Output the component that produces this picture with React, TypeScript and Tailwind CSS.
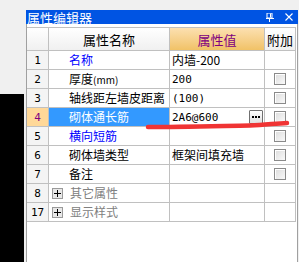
import React from "react";

const font = { fontFamily: '"Noto Sans CJK SC", "Noto Sans", sans-serif' };

function Checkbox() {
  return (
    <div className="w-[12px] h-[12px] border border-[#8a8a8a] bg-gradient-to-br from-[#dcdcdc] to-[#fafafa] shadow-[inset_1px_1px_0_#ffffff]" />
  );
}

function PlusBox() {
  return (
    <div className="w-[11px] h-[11px] border border-[#9a9a9a] bg-[#e8e8e8] flex items-center justify-center relative mr-[7px]">
      <div className="absolute w-[7px] h-[1px] bg-black" />
      <div className="absolute w-[1px] h-[7px] bg-black" />
    </div>
  );
}

type Row = {
  idx: string;
  name: string;
  value?: string;
  nameColor?: string;
  check?: boolean;
  selected?: boolean;
  group?: boolean;
};

const rows: Row[] = [
  { idx: "1", name: "名称", value: "内墙-200", nameColor: "text-[#0000ff]" },
  { idx: "2", name: "厚度", value: "200", check: true },
  { idx: "3", name: "轴线距左墙皮距离", value: "(100)", check: true },
  { idx: "4", name: "砌体通长筋", value: "2A6@600", check: true, selected: true },
  { idx: "5", name: "横向短筋", nameColor: "text-[#0000ff]", check: true },
  { idx: "6", name: "砌体墙类型", value: "框架间填充墙", check: true },
  { idx: "7", name: "备注", check: true },
  { idx: "8", name: "其它属性", group: true },
  { idx: "17", name: "显示样式", group: true },
];

export default function App() {
  return (
    <div
      className="w-[299px] h-[262px] bg-[#f0f0f0] relative overflow-hidden text-[12px] leading-none text-black"
      style={font}
    >
      <div className="flex h-full pt-[10px]">
        {/* left black area */}
        <div className="w-[24px] flex flex-col">
          <div className="h-[84px]" />
          <div className="flex-1 bg-black" />
        </div>
        <div className="w-[2px]" />
        {/* panel */}
        <div className="w-[272px] flex flex-col">
          <div className="h-[14px] bg-[#0054e3] flex items-center pl-[1px] pr-[5px] -ml-[0px]">
            <span className="text-white text-[13px] leading-none">属性编辑器</span>
            <div className="flex-1" />
            <svg width="8" height="9" viewBox="0 0 8 9" className="mr-[11px]">
              <rect x="1" y="0" width="5" height="5" fill="none" stroke="white" strokeWidth="1" />
              <rect x="4" y="0.5" width="1" height="4" fill="white" />
              <rect x="0" y="5" width="8" height="1" fill="white" />
              <rect x="3" y="6" width="1" height="3" fill="white" />
            </svg>
            <svg width="8" height="8" viewBox="0 0 8 8">
              <path d="M0.5 0.5 L7.5 7.5 M7.5 0.5 L0.5 7.5" stroke="white" strokeWidth="1.1" />
            </svg>
          </div>
          <div className="flex-1 bg-white border-l border-r border-[#a0a0a0] pt-[3px]">
            <div className="border-t border-[#c0c0c0] w-[269px]">
              {/* header */}
              <div className="flex h-[23px]">
                <div className="w-[22px] border-r border-b border-[#c0c0c0] bg-gradient-to-b from-[#ffffff] to-[#f0f0f0]" />
                <div className="w-[121px] border-r border-b border-[#c0c0c0] bg-gradient-to-b from-[#ffffff] to-[#f0f0f0] flex items-center justify-center text-[13px]">
                  属性名称
                </div>
                <div className="w-[95px] border-r border-b border-[#c0c0c0] bg-gradient-to-b from-[#fce0b0] to-[#f1c266] flex items-center justify-center text-[13px] text-[#800080]">
                  属性值
                </div>
                <div className="w-[31px] border-r border-b border-[#c0c0c0] bg-gradient-to-b from-[#ffffff] to-[#f0f0f0] flex items-center justify-center text-[13px]">
                  附加
                </div>
              </div>
              {rows.map((r) => (
                <div key={r.idx} className="flex h-[19px]">
                  <div
                    className={
                      "w-[22px] border-r border-b border-[#c0c0c0] flex items-center justify-center " +
                      (r.selected ? "bg-[#ffd898] text-[#800080]" : "bg-[#f4f4f4]")
                    }
                    style={{ fontFamily: '"DejaVu Sans Mono", monospace', fontSize: "11px" }}
                  >
                    {r.idx}
                  </div>
                  <div
                    className={
                      "w-[121px] border-r border-b border-[#c0c0c0] flex items-center " +
                      (r.group ? "pl-[3px] " : "pl-[20px] ") +
                      (r.selected ? "bg-[#3399ff] text-white" : "")
                    }
                  >
                    {r.group && <PlusBox />}
                    <span
                      className={
                        r.group ? "text-[#808080]" : r.nameColor ? r.nameColor : ""
                      }
                    >
                      {r.name}
                      {r.idx === "2" && (
                        <span className="text-[10px]">(mm)</span>
                      )}
                    </span>
                  </div>
                  <div className="w-[95px] border-r border-b border-[#c0c0c0] flex items-center pl-[2px] pr-[1px]">
                    <span
                      style={
                        r.value && /^[0-9(]/.test(r.value)
                          ? { fontFamily: '"DejaVu Sans Mono", monospace', fontSize: "11px" }
                          : undefined
                      }
                    >
                      {r.value}
                    </span>
                    {r.selected && (
                      <>
                        <div className="flex-1" />
                        <div className="w-[14px] h-[14px] border border-[#707070] bg-gradient-to-b from-[#ffffff] to-[#e0e0e0] flex items-center justify-center gap-[1px] rounded-[1px]">
                          <div className="w-[2px] h-[2px] bg-black" />
                          <div className="w-[2px] h-[2px] bg-black" />
                          <div className="w-[2px] h-[2px] bg-black" />
                        </div>
                      </>
                    )}
                  </div>
                  <div className="w-[31px] border-r border-b border-[#c0c0c0] flex items-center justify-center">
                    {r.check && <Checkbox />}
                  </div>
                </div>
              ))}
            </div>
          </div>
        </div>
      </div>
      {/* red hand-drawn stroke */}
      <svg
        className="absolute left-0 top-0 pointer-events-none"
        width="299"
        height="262"
        viewBox="0 0 299 262"
      >
        <path
          d="M148 127 C 180 127, 220 126, 250 125.5 C 265 125, 275 123.5, 287 123"
          stroke="#f03434"
          strokeWidth="4.5"
          strokeLinecap="round"
          fill="none"
        />
      </svg>
    </div>
  );
}
